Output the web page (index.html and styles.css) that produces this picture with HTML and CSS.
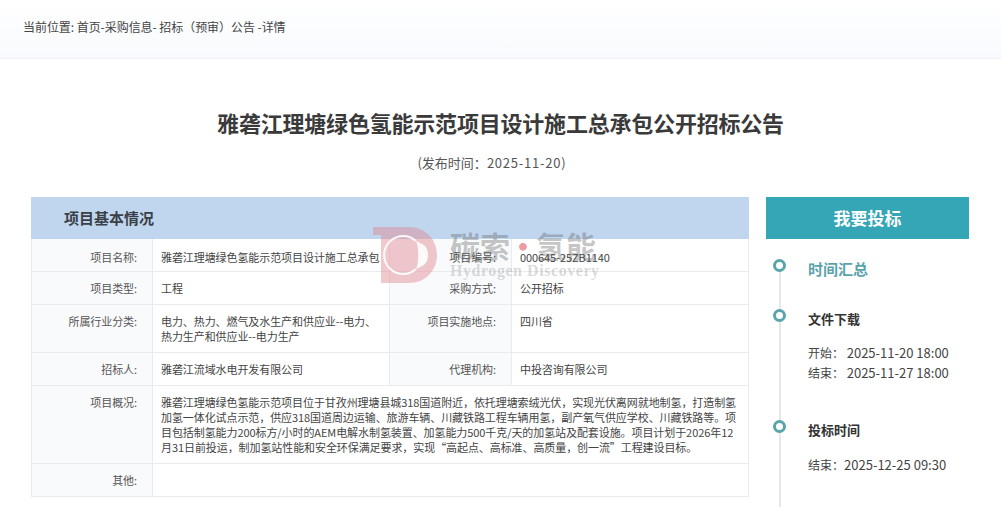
FILE: index.html
```html
<!DOCTYPE html>
<html lang="zh-CN">
  <head>
    <meta charset="UTF-8" />
    <title>雅砻江理塘绿色氢能示范项目设计施工总承包公开招标公告</title>
    <link rel="stylesheet" href="styles.css">
  </head>
  <body>
    <div class="crumb-bar">当前位置: 首页-采购信息- 招标（预审）公告 -详情</div>

    <h1 class="title">雅砻江理塘绿色氢能示范项目设计施工总承包公开招标公告</h1>
    <p class="pub-time">(发布时间：<span class="pub-date">2025-11-20</span>)</p>

    <div class="main">
      <div class="info">
        <h2 class="info-head">项目基本情况</h2>
        <table class="info-table">
          <colgroup>
            <col class="col-label" />
            <col class="col-value" />
            <col class="col-label-b" />
            <col class="col-value-b" />
          </colgroup>
          <tr class="row-1 row-first">
            <th>项目名称:</th>
            <td>雅砻江理塘绿色氢能示范项目设计施工总承包</td>
            <th>项目编号:</th>
            <td>000645-25ZB1140</td>
          </tr>
          <tr class="row-1">
            <th>项目类型:</th>
            <td>工程</td>
            <th>采购方式:</th>
            <td>公开招标</td>
          </tr>
          <tr class="row-2">
            <th>所属行业分类:</th>
            <td>电力、热力、燃气及水生产和供应业--电力、热力生产和供应业--电力生产</td>
            <th>项目实施地点:</th>
            <td>四川省</td>
          </tr>
          <tr class="row-1">
            <th>招标人:</th>
            <td>雅砻江流域水电开发有限公司</td>
            <th>代理机构:</th>
            <td>中投咨询有限公司</td>
          </tr>
          <tr class="row-4">
            <th>项目概况:</th>
            <td colspan="3">雅砻江理塘绿色氢能示范项目位于甘孜州理塘县城318国道附近，依托理塘索绒光伏，实现光伏离网就地制氢，打造制氢加氢一体化试点示范，供应318国道周边运输、旅游车辆、川藏铁路工程车辆用氢，副产氧气供应学校、川藏铁路等。项目包括制氢能力200标方/小时的AEM电解水制氢装置、加氢能力500千克/天的加氢站及配套设施。项目计划于2026年12月31日前投运，制加氢站性能和安全环保满足要求，实现“高起点、高标准、高质量，创一流”工程建设目标。</td>
          </tr>
          <tr class="row-1">
            <th>其他:</th>
            <td colspan="3"></td>
          </tr>
        </table>

        <!-- watermark sits over the table -->
        <div class="watermark">
          <svg class="wm-logo" width="64" height="56" viewBox="0 0 64 56">
            <path d="M0 0H36C52 0 64 12 64 28C64 44 52 56 36 56H8V8H0Z" fill="#e0868e" opacity="0.45" />
            <path d="M43 14A19 19 0 1 0 43 42" fill="none" stroke="#fff" stroke-width="2" opacity="0.9" />
            <path d="M43 14C47 16 49 17 51 18C54 21 55 24 55 28C55 32 54 35 51 38C49 39 47 40 43 42C46 36 46 20 43 14Z" fill="#fff" opacity="0.9" />
          </svg>
          <div class="wm-text">
            <div class="wm-cn">碳索<span class="wm-dot">·</span>氢能</div>
            <div class="wm-en">Hydrogen Discovery</div>
          </div>
        </div>
      </div>

      <div class="side">
        <div class="bid-btn">我要投标</div>
        <div class="timeline">
          <div class="tl-item tl-summary">时间汇总</div>
          <div class="tl-item tl-file">
            <h4>文件下载</h4>
            <p>开始： <span class="tl-date">2025-11-20 18:00</span></p>
            <p>结束： <span class="tl-date">2025-11-27 18:00</span></p>
          </div>
          <div class="tl-item tl-bid">
            <h4>投标时间</h4>
            <p>结束：<span class="tl-date">2025-12-25 09:30</span></p>
          </div>
        </div>
      </div>
    </div>
  </body>
</html>
```

FILE: styles.css
```css
html,
body {
  height: 507px;
  overflow: hidden;
}
body {
  margin: 0;
  font-family: "Noto Sans CJK SC", sans-serif;
  color: #444;
  background-color: #fff;
}
.crumb-bar {
  height: 59px;
  box-sizing: border-box;
  padding: 18px 0 0 23px;
  font-size: 12px;
  line-height: 18px;
  letter-spacing: -0.05px;
  color: #444;
  background: linear-gradient(#fff, #f8fafd);
  border-bottom: 1px solid #f0f2f5;
}
.title {
  margin: 47px 0 0;
  font-size: 22px;
  line-height: 32px;
  font-weight: 700;
  letter-spacing: -0.2px;
  color: #3a3a3a;
  text-align: center;
}
.pub-time {
  margin: 16px 0 0;
  padding-right: 18px;
  font-size: 13px;
  line-height: 18px;
  color: #555;
  text-align: center;
}
.pub-date {
  letter-spacing: 0.75px;
}
.main {
  display: flex;
  margin-top: 25px;
  padding-left: 31px;
  gap: 17px;
}
.info {
  position: relative;
  width: 718px;
  flex: none;
}
.info-head {
  margin: 0;
  height: 42px;
  padding-left: 33px;
  font-size: 15px;
  line-height: 42px;
  font-weight: 700;
  color: #3a4048;
  background-color: #c0d6ef;
}
.info-table {
  width: 100%;
  table-layout: fixed;
  border-collapse: collapse;
  font-size: 11px;
  line-height: 15px;
  letter-spacing: -0.08px;
}
.col-label {
  width: 121px;
}
.col-value {
  width: 237px;
}
.col-label-b {
  width: 122px;
}
.info-table th,
.info-table td {
  border: 1px solid #e9ebef;
  vertical-align: top;
  padding: 9px 7px 8px 8px;
  word-break: break-all;
}
.info-table th {
  background-color: #f9fafc;
  font-weight: 400;
  text-align: right;
  color: #555;
  padding-right: 15px;
}
.row-first th,
.row-first td {
  border-top: 0;
  padding-top: 11px;
  padding-bottom: 6px;
}
.row-1 {
  height: 33px;
}
.row-first {
  height: 32px;
}
.row-2 {
  height: 47px;
}
.row-4 {
  height: 78px;
}
.watermark {
  position: absolute;
  left: 342px;
  top: 30px;
  display: flex;
  gap: 13px;
  pointer-events: none;
}
.wm-cn {
  margin-top: 1px;
  font-size: 30px;
  line-height: 34px;
  font-weight: 700;
  color: rgba(90, 90, 90, 0.35);
  white-space: nowrap;
}
.wm-dot {
  margin: 0 -2px;
  color: rgba(226, 110, 120, 0.7);
}
.wm-en {
  font-family: "Liberation Serif", serif;
  font-size: 16px;
  line-height: 18px;
  font-weight: 700;
  color: rgba(130, 130, 130, 0.3);
  letter-spacing: 0.55px;
  white-space: nowrap;
}
.side {
  width: 203px;
  flex: none;
}
.bid-btn {
  height: 42px;
  font-size: 17px;
  line-height: 42px;
  font-weight: 700;
  text-align: center;
  color: #fff;
  background-color: #35a6b6;
}
.timeline {
  margin: 20px 0 0 13px;
  padding-left: 27px;
  border-left: 2px solid #e4e7eb;
  height: 300px;
}
.tl-item {
  position: relative;
}
.tl-item::before {
  content: "";
  position: absolute;
  left: -35px;
  top: 0;
  width: 13px;
  height: 13px;
  box-sizing: border-box;
  border: 3px solid #58a5ab;
  border-radius: 50%;
  background-color: #fff;
}
.tl-summary {
  height: 51px;
  font-size: 15px;
  line-height: 20px;
  font-weight: 700;
  color: #5aa3ab;
}
.tl-file {
  height: 111px;
}
.tl-item h4 {
  margin: -1px 0 14px;
  font-size: 13px;
  line-height: 20px;
  font-weight: 700;
  color: #333;
}
.tl-bid h4 {
  margin: 0 0 15px;
}
.tl-item p {
  margin: 0;
  font-size: 12px;
  line-height: 20px;
  color: #444;
}
.tl-date {
  font-size: 13px;
}
```
